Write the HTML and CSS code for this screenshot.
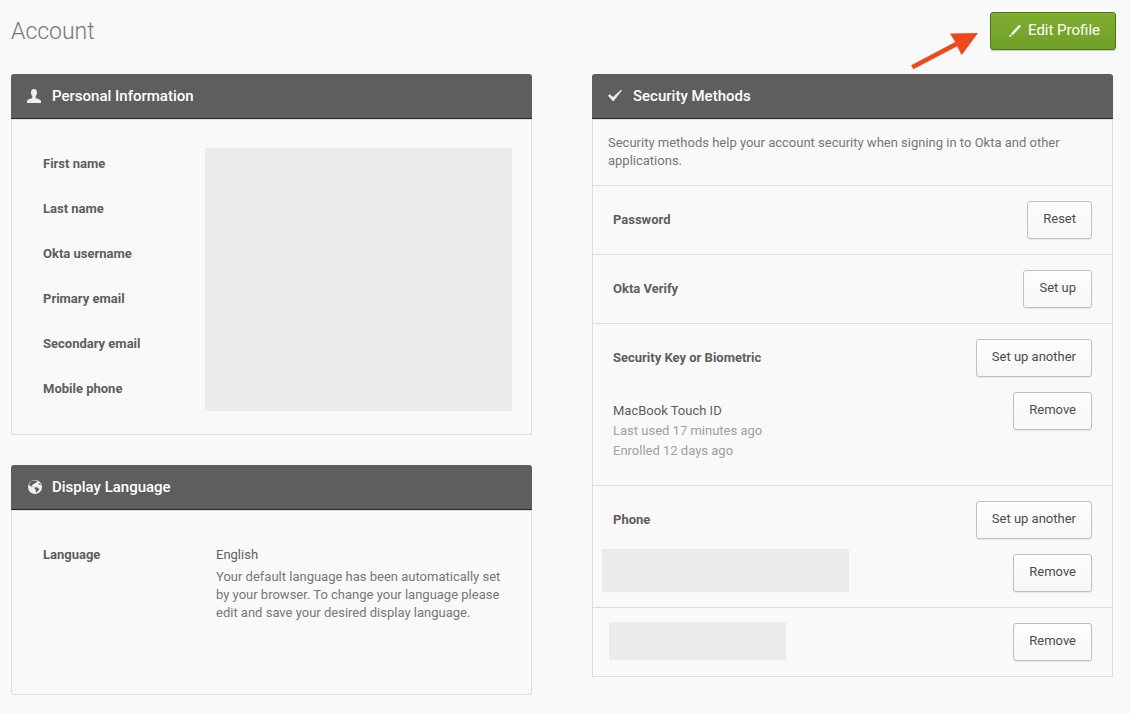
FILE: index.html
```html
<!DOCTYPE html>
<html lang="en">
<head>
<meta charset="utf-8">
<title>Account</title>
<link rel="stylesheet" href="styles.css">
</head>
<body>
<header class="page-header">
  <h1 class="page-title">Account</h1>
  <div class="page-actions">
    <svg class="pointer" width="69" height="38" viewBox="911 32 69 38" aria-hidden="true"><path d="M912.2 65.2L956.2 42 951 33.4 979 33 962.6 55.2 958.2 46.2 914.3 69.2z" fill="#f0481d"/></svg>
    <button class="button button-primary" type="button">
      <svg width="14" height="14" viewBox="0 0 14 14" aria-hidden="true"><path d="M11.2.8l1.800 1.500L4.900 11 3 9.400zM2.300 10.200l1.800 1.500L.8 13.200z" fill="#fff"/></svg>
      Edit Profile
    </button>
  </div>
</header>
<main class="columns">
  <div class="column">
    <section class="panel">
      <h2 class="panel-title">
        <svg width="16" height="16" viewBox="0 0 16 16" aria-hidden="true"><path d="M8 1C5.900 1 5 2.400 5 4.200c0 1.700.5 3 1.300 3.900v1.600C6.100 10.700 1 10.900 1 13.300V15h14v-1.700c0-2.400-5.100-2.600-5.300-3.600V8.100C10.500 7.200 11 5.900 11 4.200 11 2.400 10.100 1 8 1z" fill="#eee"/></svg>
        Personal Information
      </h2>
      <div class="panel-body profile">
        <ul class="profile-labels">
          <li>First name</li>
          <li>Last name</li>
          <li>Okta username</li>
          <li>Primary email</li>
          <li>Secondary email</li>
          <li>Mobile phone</li>
        </ul>
        <div class="redacted profile-values"></div>
      </div>
    </section>
    <section class="panel">
      <h2 class="panel-title">
        <svg width="16" height="16" viewBox="0 0 16 16" aria-hidden="true"><circle cx="9" cy="8" r="7" fill="#eee"/><path d="M5.200 2.300l2.300-.8 2.800.3.800 1-.9.900-1.500.2-.8 1.300-1.600.5-.6.800 1 .9-.4.5-1.500-.8-1.700-.9.300-1.500zM8.700 8.300l2-.1 2.500 1.500-.4 1.500-1.400 1-.8 1.500-.8-1.400-.1-1.600-1.200-1.100zM12.900 4.100l1.200.5.8 1.500-1.200-.3-1.100-.9z" fill="#5e5e5e"/></svg>
        Display Language
      </h2>
      <div class="panel-body language">
        <div class="language-label">Language</div>
        <div>
          <div class="language-value">English</div>
          <p class="hint">Your default language has been automatically set by your browser. To change your language please edit and save your desired display language.</p>
        </div>
      </div>
    </section>
  </div>
  <div class="column">
    <section class="panel">
      <h2 class="panel-title">
        <svg width="16" height="16" viewBox="0 0 16 16" aria-hidden="true"><path d="M1 7.700l1.700-1.500 3.400 2.700L14 1.800l.8.700L6.300 13.500z" fill="#eee"/></svg>
        Security Methods
      </h2>
      <div class="panel-body methods">
        <p class="intro">Security methods help your account security when signing in to Okta and other applications.</p>
        <div class="method">
          <div class="method-row"><h3>Password</h3><button class="button" type="button">Reset</button></div>
        </div>
        <div class="method">
          <div class="method-row"><h3>Okta Verify</h3><button class="button" type="button">Set up</button></div>
        </div>
        <div class="method">
          <div class="method-row"><h3>Security Key or Biometric</h3><button class="button" type="button">Set up another</button></div>
          <div class="method-row">
            <div class="enrolled">
              <div class="enrolled-name">MacBook Touch ID</div>
              <div>Last used 17 minutes ago</div>
              <div>Enrolled 12 days ago</div>
            </div>
            <button class="button" type="button">Remove</button>
          </div>
        </div>
        <div class="method">
          <div class="method-row"><h3>Phone</h3><button class="button" type="button">Set up another</button></div>
          <div class="method-row"><div class="redacted phone-number"></div><button class="button" type="button">Remove</button></div>
        </div>
        <div class="method">
          <div class="method-row"><div class="redacted phone-extra"></div><button class="button" type="button">Remove</button></div>
        </div>
      </div>
    </section>
  </div>
</main>
</body>
</html>
```
FILE: styles.css
```css
* { box-sizing: border-box; }
body {
  margin: 0;
  background: #f9f9f9;
  color: #777;
  font: 13px/18px Roboto, "Liberation Sans", sans-serif;
}
h1, h2, h3, p, ul { margin: 0; padding: 0; }
ul { list-style: none; }

.page-header {
  display: flex;
  justify-content: space-between;
  padding: 12px 15px 22px 11px;
}
.page-title {
  font-size: 23px;
  font-weight: 300;
  line-height: 40px;
  color: #777;
}
.page-actions { position: relative; }
.pointer {
  position: absolute;
  top: 20px;
  right: calc(100% + 11px);
}

.button {
  flex: none;
  height: 38px;
  padding: 0 15px 2px;
  border: 1px solid #c0c0c0;
  border-radius: 3px;
  background: linear-gradient(#fdfdfd, #f7f7f7);
  box-shadow: 0 1px 1px rgba(0, 0, 0, 0.08);
  color: #4c4c4c;
  font: inherit;
}
.button-primary {
  display: flex;
  align-items: center;
  gap: 6px;
  padding: 0 15px 2px 17px;
  border-color: #4c7517;
  background: linear-gradient(#7fae30, #6f9f27);
  box-shadow: 0 1px 1px rgba(0, 0, 0, 0.2);
  color: #fff;
  font-size: 15px;
}
.button-primary svg { margin-top: 2px; }

.columns {
  display: grid;
  grid-template-columns: 1fr 1fr;
  gap: 60px;
  align-items: start;
  padding: 0 18px 19px 11px;
}
.column {
  display: flex;
  flex-direction: column;
  gap: 30px;
}

.panel-title {
  display: flex;
  align-items: center;
  gap: 10px;
  height: 45px;
  padding: 0 15px;
  border-bottom: 1px solid #2b2b2b;
  border-radius: 3px 3px 0 0;
  background: #5e5e5e;
  color: #fff;
  font-size: 15px;
  font-weight: 500;
}
.panel-body { border: 1px solid #ddd; }

.redacted { background: #ebebeb; }

.profile {
  display: grid;
  grid-template-columns: 162px 1fr;
  padding: 21px 19px 23px 31px;
}
.profile-labels li {
  line-height: 45px;
  font-weight: 700;
  color: #5e5e5e;
}
.profile-values { margin-top: 7px; }

.language {
  display: grid;
  grid-template-columns: 173px 1fr;
  min-height: 185px;
  padding: 35px 30px 30px 31px;
  border-radius: 0 0 3px 3px;
}
.language-label {
  font-weight: 700;
  color: #5e5e5e;
}
.language-value {
  margin-bottom: 4px;
  color: #5e5e5e;
}

.intro { padding: 14px 15px 15px; }
.method {
  display: flex;
  flex-direction: column;
  gap: 15px;
  padding: 15px 20px;
  border-top: 1px solid #ddd;
}
.method-row {
  display: flex;
  justify-content: space-between;
  align-items: flex-start;
}
.method-row h3 {
  font-size: 13px;
  line-height: 38px;
  font-weight: 700;
  color: #5e5e5e;
}
.enrolled {
  padding: 9px 0;
  line-height: 20px;
  color: #a0a0a0;
}
.enrolled-name { color: #5e5e5e; }
.phone-number {
  width: 247px;
  height: 43px;
  margin: -5px 0 0 -11px;
}
.phone-extra {
  width: 177px;
  height: 38px;
  margin: -1px 0 0 -4px;
}
```
